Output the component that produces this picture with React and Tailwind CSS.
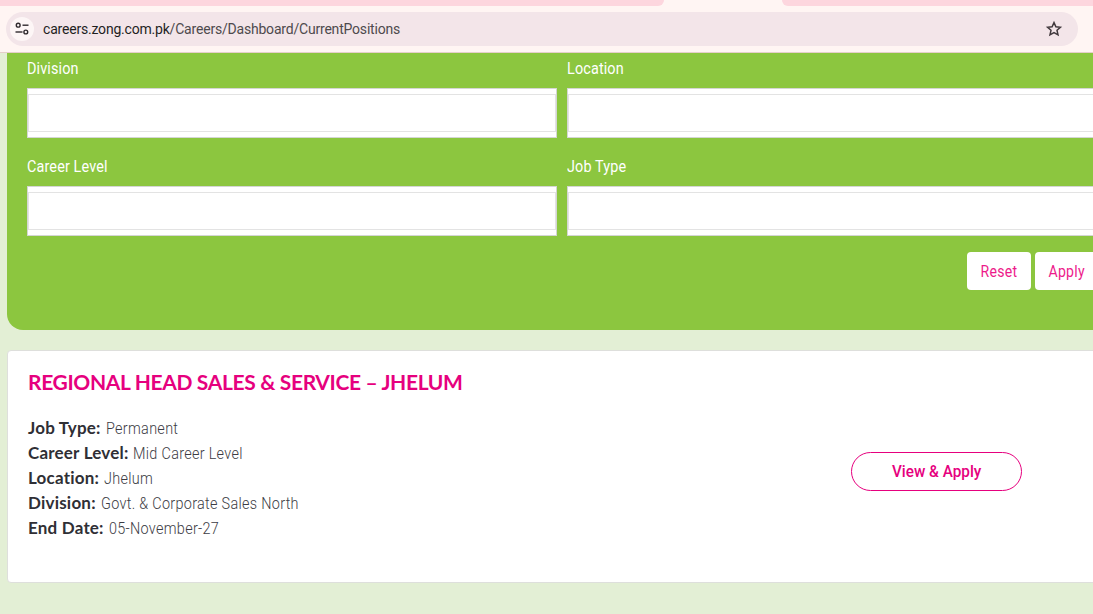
import React from "react";

const body = "font-['Roboto',sans-serif]";
const head = "font-['Lato',sans-serif]";

function Field({ label }) {
  return (
    <div className="w-[530px] shrink-0">
      <div className={`${body} text-[16px] leading-[20px] h-[31px] pt-[2px] text-white tracking-[0.15px] scale-x-[0.9] origin-left`}>{label}</div>
      <div className="h-[50px] bg-white border border-[#d4d6d4] py-[5px]">
        <div className="h-[38px] border border-[#e3e3e3] bg-white" />
      </div>
    </div>
  );
}

function Row({ k, v }) {
  return (
    <div className="h-[25px] leading-[25px] text-[#2f2f35] whitespace-nowrap flex items-baseline">
      <span className={`${head} font-bold text-[17px] tracking-[0.2px] mr-[5px]`}>{k}</span>
      <span className={`${body} text-[16px] text-[#3c3c44] tracking-[0.35px] scale-x-[0.9] origin-left font-light`}>{v}</span>
    </div>
  );
}

function Btn({ children }) {
  return (
    <button className={`${body} w-[64px] h-[38px] bg-white rounded-[4px] text-[16px] text-[#ed1b8b] tracking-[0.3px] pt-[1px]`}>
      <span className="inline-block scale-x-[0.88]">{children}</span>
    </button>
  );
}

export default function App() {
  return (
    <div className="w-[1093px] h-[614px] overflow-hidden bg-[#e3efd5] flex flex-col">
      <div className="h-[53px] shrink-0 bg-[#fff5f3] border-b border-[#e5cfca] flex flex-col">
        <div className="h-[6px] flex justify-between">
          <div className="w-[664px] bg-[#fdd6de] rounded-br-[10px]" />
          <div className="w-[311px] bg-[#fdd6de] rounded-bl-[10px]" />
        </div>
        <div className="h-[34px] mt-[6px] ml-[6px] w-[1072px] bg-[#f3e5e9] rounded-full flex items-center pl-[4px] pr-[15px]">
          <div className="w-[24px] h-[24px] rounded-full bg-[#fdf6f6] flex items-center justify-center">
            <svg width="16" height="16" viewBox="0 0 16 16" fill="none" stroke="#2f2a2e" strokeWidth="1.4">
              <circle cx="4.2" cy="4.2" r="1.9" />
              <path d="M8.5 4.2h6" />
              <circle cx="11.8" cy="11" r="1.9" />
              <path d="M1.5 11h7" />
            </svg>
          </div>
          <div className="ml-[9px] text-[14px] font-['Roboto',sans-serif] text-[#1f1f1f] whitespace-nowrap tracking-[-0.2px]">
            careers.zong.com.pk<span className="text-[#4e4a4d]">/Careers/Dashboard/CurrentPositions</span>
          </div>
          <svg className="ml-auto" width="18" height="18" viewBox="0 0 18 18" fill="none" stroke="#40383c" strokeWidth="1.5" strokeLinejoin="miter">
            <path d="M9 2.6l1.9 4.2 4.5.5-3.4 3 1 4.5L9 12.5l-4 2.3 1-4.5-3.4-3 4.5-.5z" />
          </svg>
        </div>
      </div>

      <div className="ml-[7px] w-[1200px] shrink-0 h-[277px] bg-[#8cc63f] rounded-bl-[16px] pl-[20px] pt-[4px]">
        <div className="flex gap-[10px]">
          <Field label="Division" />
          <Field label="Location" />
        </div>
        <div className="flex gap-[10px] mt-[17px]">
          <Field label="Career Level" />
          <Field label="Job Type" />
        </div>
        <div className="flex gap-[4px] ml-[940px] mt-[16px]">
          <Btn>Reset</Btn>
          <Btn>Apply</Btn>
        </div>
      </div>

      <div className="ml-[7px] mt-[20px] w-[1200px] h-[233px] shrink-0 bg-white border border-[#dedfdc] rounded-[4px] pl-[20px] pt-[16px] relative flex">
        <div>
          <h2 className={`${head} font-bold text-[21px] leading-[30px] text-[#e6007e] whitespace-nowrap tracking-[-0.35px]`}>
            REGIONAL HEAD SALES &amp; SERVICE – JHELUM
          </h2>
          <div className="mt-[18px]">
            <Row k="Job Type:" v="Permanent" />
            <Row k="Career Level:" v="Mid Career Level" />
            <Row k="Location:" v="Jhelum" />
            <Row k="Division:" v="Govt. & Corporate Sales North" />
            <Row k="End Date:" v="05-November-27" />
          </div>
        </div>
        <button className={`${body} absolute left-[843px] top-[101px] w-[171px] h-[39px] rounded-full border border-[#e6007e] bg-white text-[17px] font-medium text-[#e6007e]`}>
          <span className="inline-block scale-x-[0.9]">View &amp; Apply</span>
        </button>
      </div>
    </div>
  );
}
